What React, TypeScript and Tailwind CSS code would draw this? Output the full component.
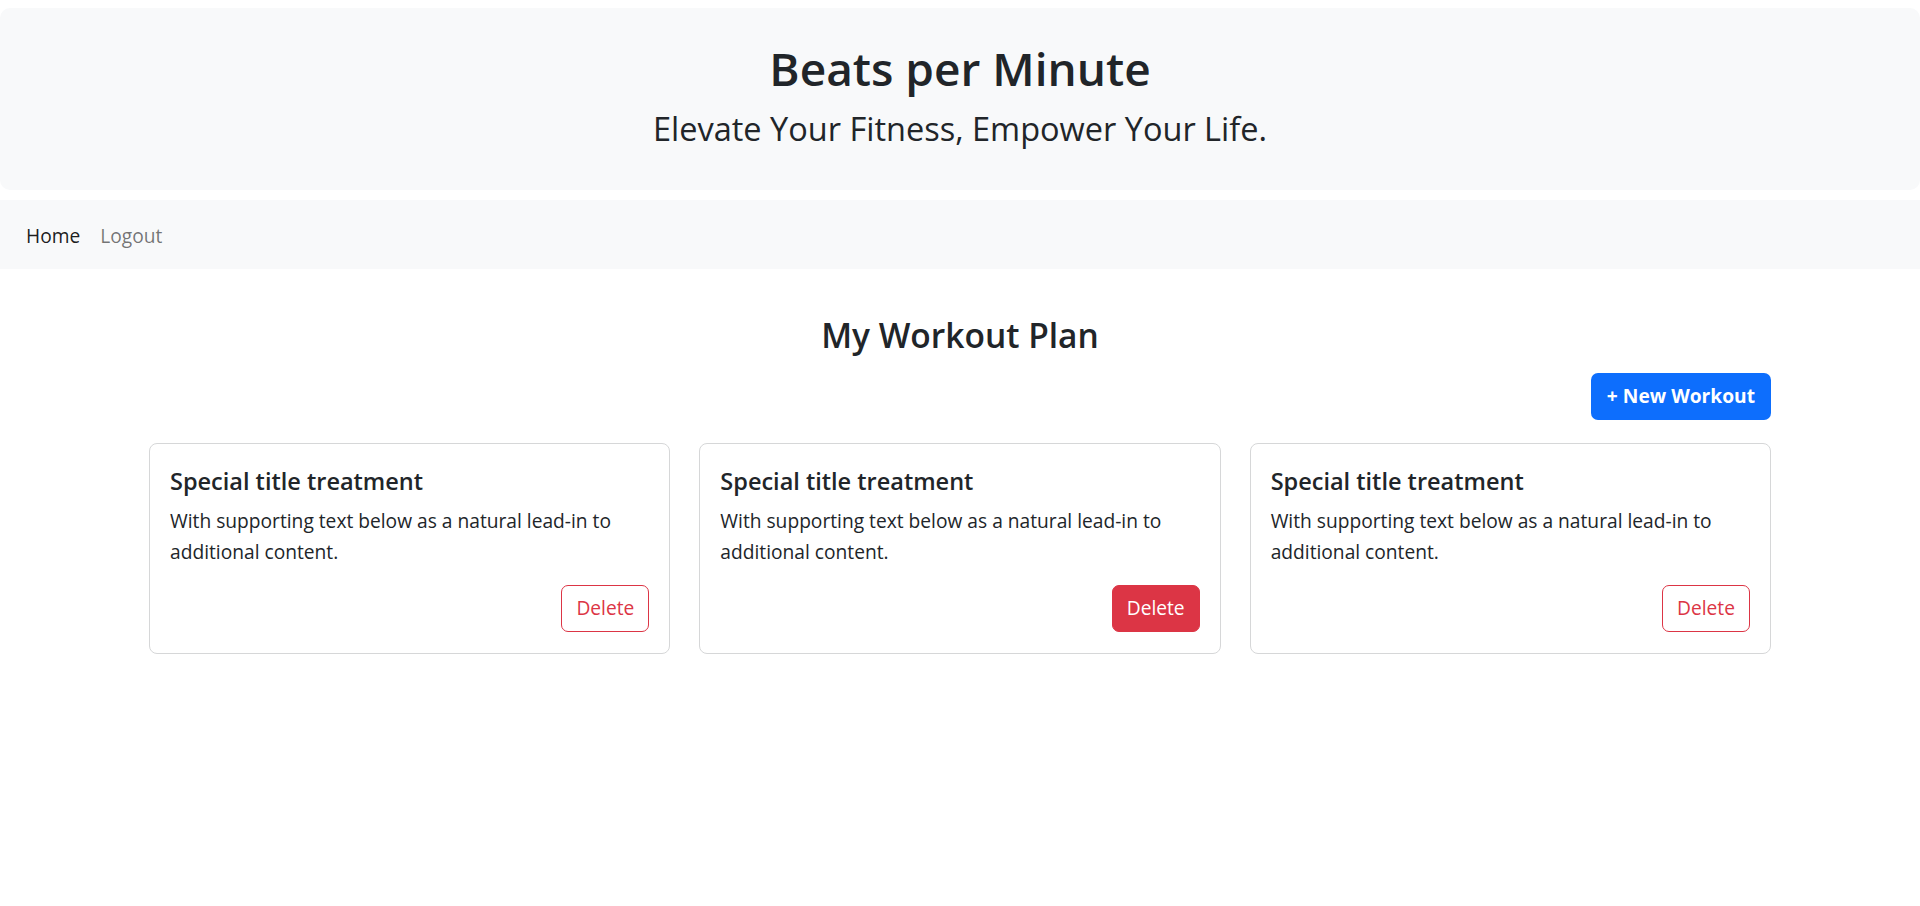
import React from "react";

const cards = [
  { id: 1, active: false },
  { id: 2, active: true },
  { id: 3, active: false },
];

const WorkoutCard = ({ active }: { active: boolean }) => {
  return (
    <div className="flex flex-col rounded-[8px] border border-[#d6d7d8] bg-white px-[20px] pt-[23px] pb-[21px]">
      <h5 className="text-[23.5px] leading-[1.2] font-semibold text-[#212529] mb-[11px]">
        Special title treatment
      </h5>
      <p className="text-[19.2px] leading-[1.6] text-[#212529] mb-[17px]">
        With supporting text below as a natural lead-in to additional content.
      </p>
      <div className="flex justify-end">
        {active ? (
          <button className="h-[47px] px-[14px] rounded-[7px] bg-[#dc3545] border border-[#dc3545] text-white text-[19.2px]">
            Delete
          </button>
        ) : (
          <button className="h-[47px] px-[14px] rounded-[7px] border border-[#dc3545] text-[#dc3545] text-[19.2px]">
            Delete
          </button>
        )}
      </div>
    </div>
  );
};

export default function App() {
  return (
    <div className="min-h-screen bg-white font-['Open_Sans',sans-serif] text-[#212529] pt-[8px]">
      <header className="h-[182px] rounded-[10px] bg-[#f8f9fa] flex flex-col items-center pt-[33px]">
        <h1 className="text-[46px] leading-[1.2] font-semibold">Beats per Minute</h1>
        <p className="text-[32.5px] leading-[1.3] font-normal mt-[12px]">
          Elevate Your Fitness, Empower Your Life.
        </p>
      </header>
      <nav className="mt-[10px] h-[69px] bg-[#f8f9fa] flex items-center px-[26px] gap-[20px] text-[19.2px] pt-[3px]">
        <a className="text-black/90" href="#">
          Home
        </a>
        <a className="text-black/55" href="#">
          Logout
        </a>
      </nav>
      <main className="w-[1622px] mx-auto">
        <h2 className="text-center text-[33.5px] leading-[1.2] font-semibold mt-[46px]">
          My Workout Plan
        </h2>
        <div className="flex justify-end mt-[18px]">
          <button className="h-[47px] px-[16px] rounded-[7px] bg-[#0d6efd] text-white text-[19.2px] font-bold">
            + New Workout
          </button>
        </div>
        <div className="grid grid-cols-3 gap-[29px] mt-[23px]">
          {cards.map((c) => (
            <WorkoutCard key={c.id} active={c.active} />
          ))}
        </div>
      </main>
    </div>
  );
}
